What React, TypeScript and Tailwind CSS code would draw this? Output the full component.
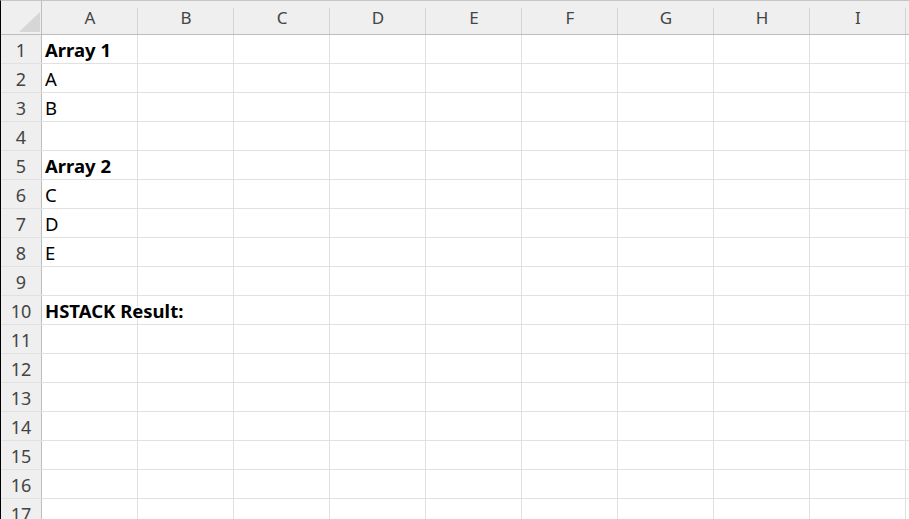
import React from 'react'

const cols = ['A', 'B', 'C', 'D', 'E', 'F', 'G', 'H', 'I', '']

const cells: Record<number, { text: string; bold?: boolean }> = {
  1: { text: 'Array 1', bold: true },
  2: { text: 'A' },
  3: { text: 'B' },
  5: { text: 'Array 2', bold: true },
  6: { text: 'C' },
  7: { text: 'D' },
  8: { text: 'E' },
  10: { text: 'HSTACK Result:', bold: true },
}

export default function App() {
  const rows = Array.from({ length: 17 }, (_, i) => i + 1)

  return (
    <div className="h-[519px] w-[909px] overflow-hidden bg-white border-l border-black border-t border-t-[#c6c6c6]">
      {/* column headers */}
      <div className="flex h-[34px] bg-[#efefef] border-b border-[#bdbdbd]">
        <div className="relative w-[41px] shrink-0 border-r border-[#bdbdbd]">
          <svg className="absolute left-[18px] top-[11px]" width="21" height="20" viewBox="0 0 21 20">
            <polygon points="21,0 21,20 0,20" fill="#d6d6d6" />
          </svg>
        </div>
        {cols.map((c, i) => (
          <div key={i} className="relative w-[96px] shrink-0 flex items-center justify-center pt-[1px] text-[17px] text-[#444] font-['Noto_Sans',sans-serif]">
            {c}
            <span className="absolute right-0 top-[7px] bottom-0 w-px bg-[#d4d4d4]" />
          </div>
        ))}
      </div>

      {rows.map((r) => (
        <div key={r} className="flex h-[29px] border-b border-[#e1e1e1]">
          <div className="w-[41px] shrink-0 bg-[#efefef] border-r border-[#bdbdbd] flex items-center justify-center pt-[2px] text-[18px] text-[#444] font-['Noto_Sans',sans-serif]">
            {r}
          </div>
          {cols.map((c, ci) => (
            <div key={ci} className="w-[96px] shrink-0 border-r border-[#e1e1e1] flex items-center pl-[3px] pt-[2px] overflow-visible whitespace-nowrap text-[18.5px] text-black font-['Noto_Sans',sans-serif]">
              {ci === 0 && cells[r] ? (
                <span className={cells[r].bold ? 'font-bold' : ''}>{cells[r].text}</span>
              ) : null}
            </div>
          ))}
        </div>
      ))}
    </div>
  )
}
